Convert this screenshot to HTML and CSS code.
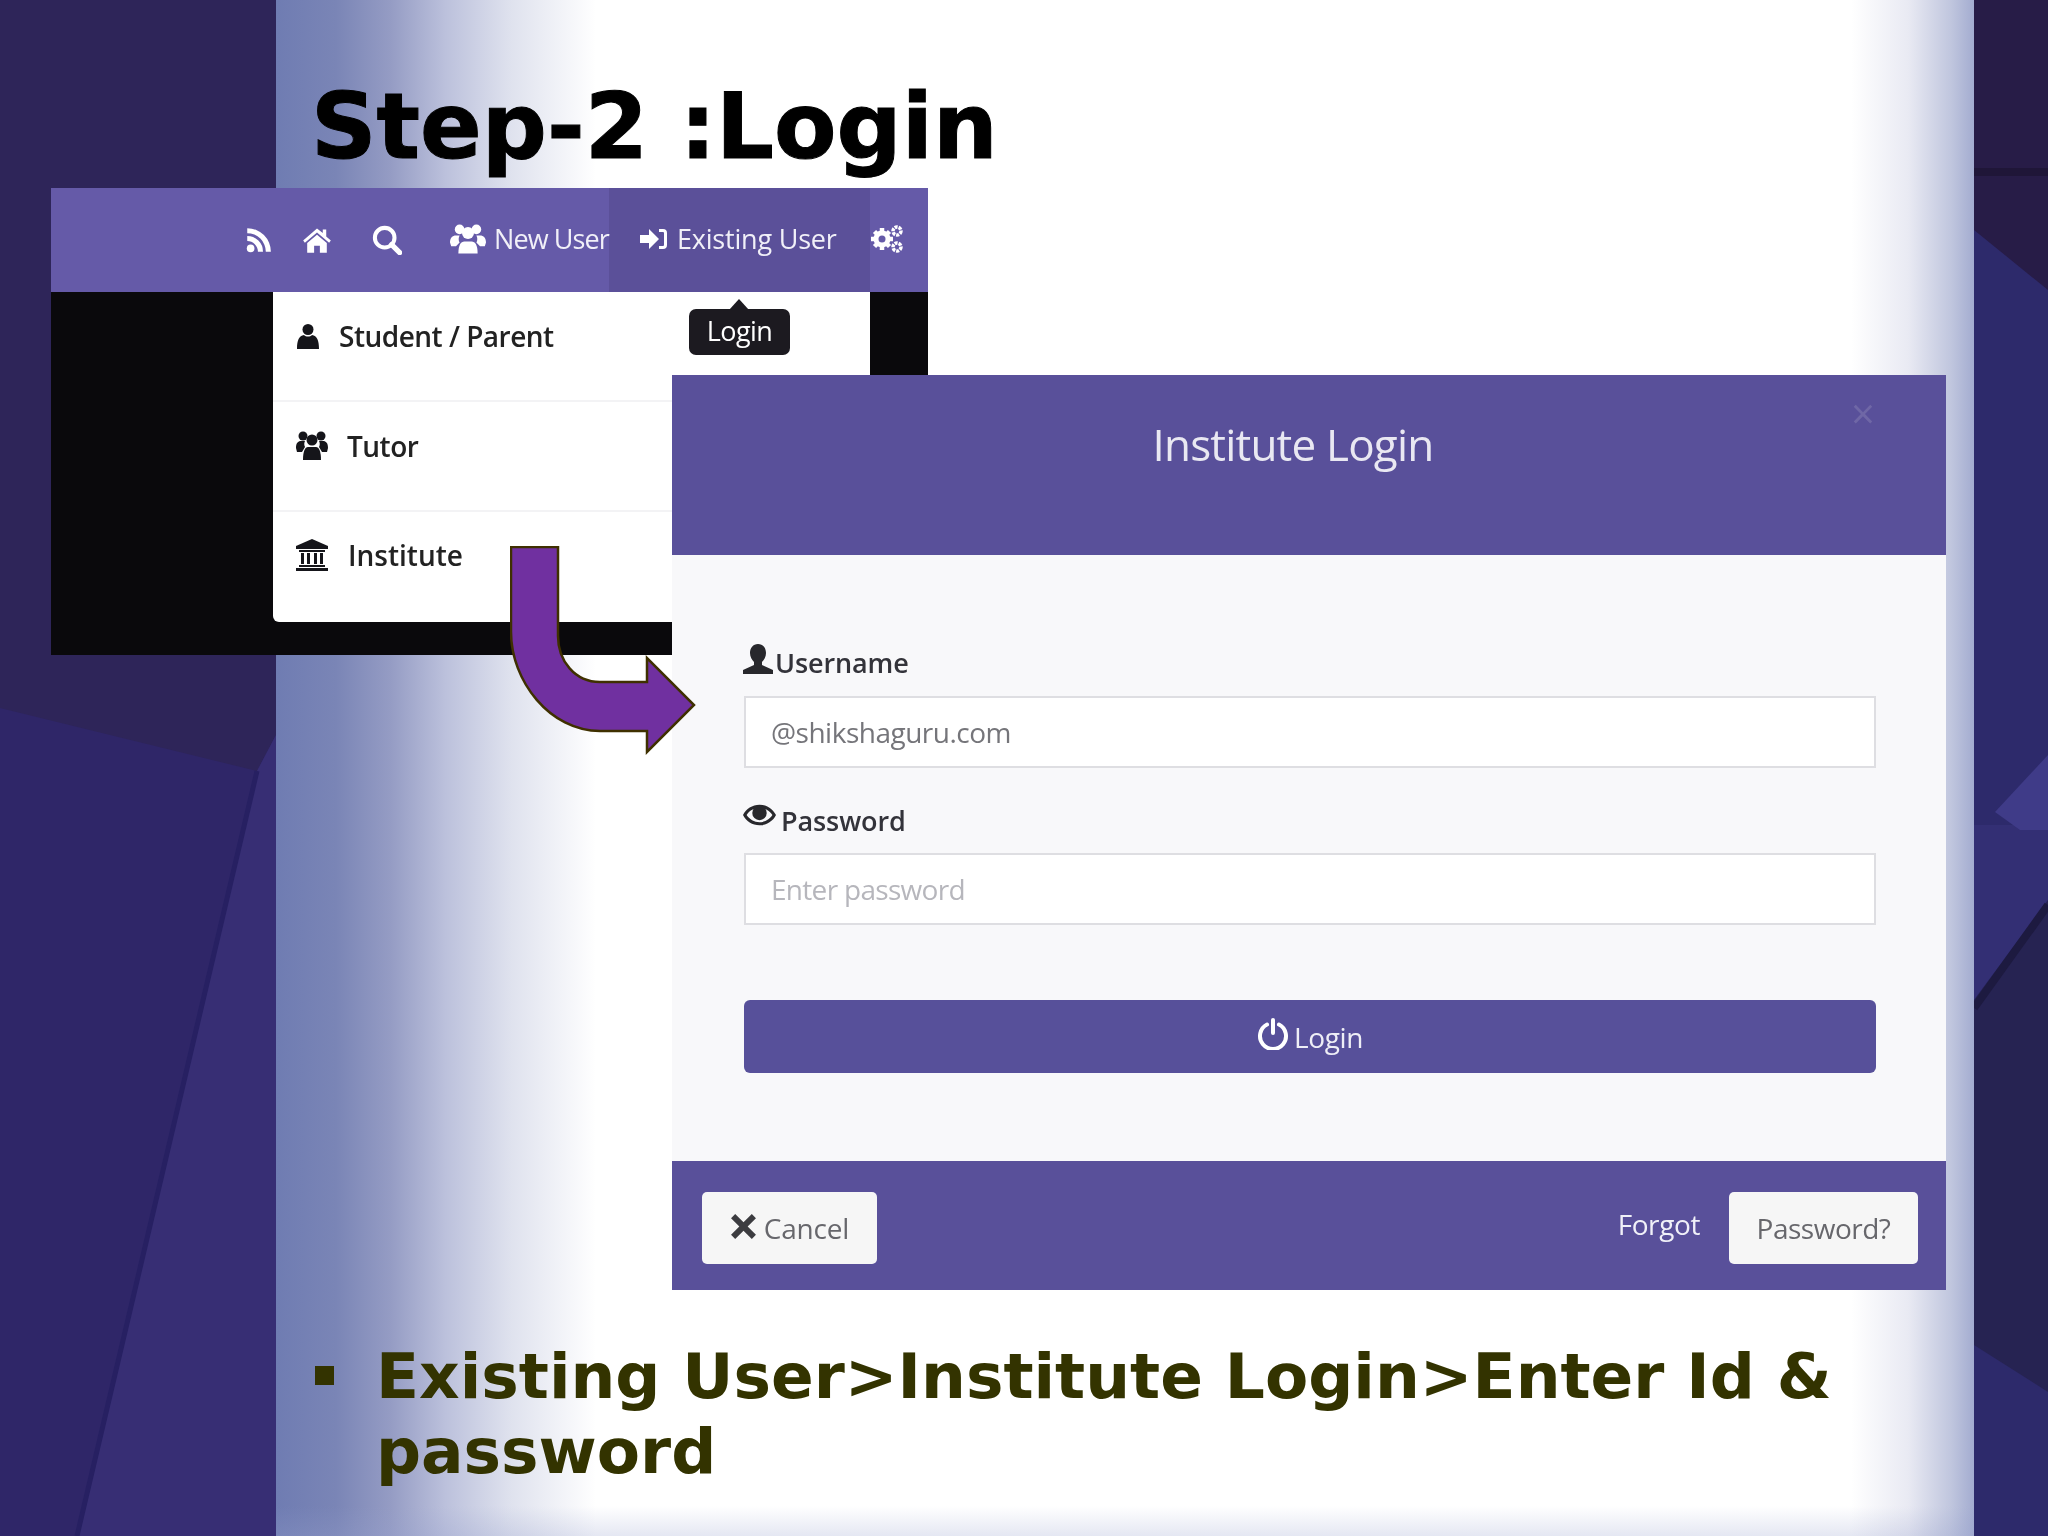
FILE: index.html
```html
<!DOCTYPE html>
<html lang="en">
<head>
    <meta charset="UTF-8">
    <title>Step-2 :Login</title>
    <link rel="stylesheet" href="styles.css">
</head>
<body>
    <div class="slide">
        <svg class="backdrop" viewBox="0 0 2048 1536">
            <rect width="276" height="1536" fill="#2e2559"/>
            <polygon points="0,708 257,771 276,735 276,1536 0,1536" fill="#2f2668"/>
            <polygon points="257,771 276,735 276,1536 77,1536" fill="#372e74"/>
            <polyline points="257,771 77,1536" fill="none" stroke="#272062" stroke-width="5"/>
            <rect x="1974" width="74" height="1536" fill="#2d2a6b"/>
            <polygon points="1974,0 2048,0 2048,290 1974,230" fill="#271c47"/>
            <rect x="1974" y="168" width="74" height="8" fill="#1f1638"/>
            <polygon points="1974,825 2048,825 2048,900 1974,1000" fill="#332f74"/>
            <polygon points="1995,812 2048,755 2048,830 2020,830" fill="#3f3b88"/>
            <polygon points="1974,1000 2048,900 2048,1392 1974,1345" fill="#262352"/>
            <polyline points="1974,1008 2048,905" fill="none" stroke="#1d1a40" stroke-width="8"/>
        </svg>

        <div class="panel">
            <h1 class="title">Step-2 :Login</h1>
            <ul class="points">
                <li>Existing User&gt;Institute Login&gt;Enter Id &amp; password</li>
            </ul>
        </div>

        <div class="nav-shot">
            <div class="navbar">
                <svg class="nav-icon rss" viewBox="0 0 24 24"><circle cx="5" cy="19" r="3.400"/><path d="M2 8v4.500a9.500 9.500 0 0 1 9.500 9.500H16A14 14 0 0 0 2 8z"/><path d="M2 1v4.500A16.500 16.500 0 0 1 18.500 22H23A21 21 0 0 0 2 1z"/></svg>
                <svg class="nav-icon home" viewBox="0 0 26 24"><path d="M13 2 1 12.500l1.500 1.800L13 5.500l10.500 8.800 1.500-1.800-4-3.500V3h-3v3z"/><path d="M13 7.500 4.500 14.500V23h6v-6h5v6h6v-8.500z"/></svg>
                <svg class="nav-icon search" viewBox="0 0 26 26"><circle cx="11" cy="11" r="8.500" fill="none" stroke="#fff" stroke-width="3.500"/><path d="M17 17l7 7" stroke="#fff" stroke-width="4.500" stroke-linecap="round"/></svg>
                <div class="nav-link first">
                    <svg class="nav-icon users" viewBox="0 0 30 26"><circle cx="8" cy="5" r="4"/><circle cx="22" cy="5" r="4"/><circle cx="15" cy="8" r="5"/><path d="M0 16c0-4 2-6 5-6h3c-1 2-1 4 0 6l-3 3H1z"/><path d="M30 16c0-4-2-6-5-6h-3c1 2 1 4 0 6l3 3h4z"/><path d="M7 25c0-7 2-10 5-10h6c3 0 5 3 5 10z"/></svg>
                    <span class="new-user">New User</span>
                </div>
                <div class="nav-link active">
                    <svg class="nav-icon signin" viewBox="0 0 28 24"><path d="M0 8h9V2l10 10-10 10v-6H0z"/><path d="M19 2h4a4 4 0 0 1 4 4v12a4 4 0 0 1-4 4h-4v-3h4a1 1 0 0 0 1-1V6a1 1 0 0 0-1-1h-4z"/></svg>
                    <span>Existing User</span>
                </div>
                <svg class="nav-icon gears" viewBox="0 0 34 30"><path d="M12 4v22M1 15h22M4.500 7.500l15 15M19.500 7.500l-15 15" stroke="#fff" stroke-width="4.500"/><circle cx="12" cy="15" r="8.500"/><circle cx="12" cy="15" r="3.500" fill="#655aa8"/><circle cx="27" cy="7" r="4" fill="none" stroke="#fff" stroke-width="3.500" stroke-dasharray="3 1"/><circle cx="27" cy="23" r="4" fill="none" stroke="#fff" stroke-width="3.500" stroke-dasharray="3 1"/></svg>
            </div>
            <div class="dark-area">
                <div class="dropdown">
                    <div class="drop-item">
                        <svg class="drop-icon student" viewBox="0 0 24 26"><circle cx="12" cy="6.500" r="5.500"/><path d="M1 26c0-9 2-13 7-14 2 2 6 2 8 0 5 1 7 5 7 14z"/></svg>
                        <span class="tight">Student / Parent</span>
                    </div>
                    <div class="drop-item">
                        <svg class="drop-icon tutor" viewBox="0 0 32 30"><circle cx="7" cy="5" r="4.500"/><circle cx="25" cy="5" r="4.500"/><circle cx="16" cy="9" r="5.500"/><path d="M0 17c0-5 2-7 5-7h4c-1 2-1 4 0 6l-3 5H1z"/><path d="M32 17c0-5-2-7-5-7h-4c1 2 1 4 0 6l3 5h5z"/><path d="M7 29c0-9 2-13 5-13h8c3 0 5 4 5 13z"/></svg>
                        <span class="tight">Tutor</span>
                    </div>
                    <div class="drop-item last">
                        <svg class="drop-icon bank" viewBox="0 0 32 32"><path d="M16 0 0 7v3h32V7z"/><path d="M3 11h26v2H3zM5 14h3v11H5zM11 14h3v11h-3zM18 14h3v11h-3zM24 14h3v11h-3zM3 26h26v2H3zM0 29h32v3H0z"/></svg>
                        <span>Institute</span>
                    </div>
                    <div class="tooltip">Login</div>
                </div>
            </div>
        </div>

        <div class="modal">
            <div class="modal-head">
                <h2>Institute Login</h2>
                <span class="close">×</span>
            </div>
            <div class="modal-body">
                <label class="field-label">
                    <svg class="label-icon" viewBox="0 0 30 30"><path d="M15 0c-5 0-8 4-8 9 0 4 2 7 4 9v3L0 26v4h30v-4l-11-5v-3c2-2 4-5 4-9 0-5-3-9-8-9z"/></svg>
                    <span>Username</span>
                </label>
                <input class="field" type="text" placeholder="@shikshaguru.com">
                <label class="field-label second">
                    <svg class="label-icon eye" viewBox="0 0 32 24"><path d="M16 2C9 2 3 6 0 12c3 6 9 10 16 10s13-4 16-10C29 6 23 2 16 2zm0 17c-5 0-10-3-12.500-7C6 8 11 5 16 5s10 3 12.500 7C26 16 21 19 16 19z"/><circle cx="16" cy="10" r="7"/></svg>
                    <span>Password</span>
                </label>
                <input class="field faint" type="password" placeholder="Enter password">
                <button class="login-btn">
                    <svg class="power" viewBox="0 0 32 32"><path d="M10 6.500a13 13 0 1 0 12 0" fill="none" stroke="#fff" stroke-width="4" stroke-linecap="round"/><path d="M16 2v13" stroke="#fff" stroke-width="4" stroke-linecap="round"/></svg>
                    <span>Login</span>
                </button>
            </div>
            <div class="modal-foot">
                <button class="foot-btn cancel">
                    <svg class="x-icon" viewBox="0 0 26 26"><path d="M5 1 13 9l8-8 4 4-8 8 8 8-4 4-8-8-8 8-4-4 8-8-8-8z"/></svg>
                    <span>Cancel</span>
                </button>
                <span class="forgot">Forgot</span>
                <button class="foot-btn">Password?</button>
            </div>
        </div>

        <svg class="arrow" viewBox="0 0 200 220">
            <path d="M1 1H48V90C48 115 65 136 90 136H137V112L184 159 137 206V185H90C40 185 1 135 1 86z" fill="#7030a0" stroke="#3f3000" stroke-width="2.500"/>
        </svg>
    </div>
</body>
</html>
```

FILE: styles.css
```css
body {
    margin: 0;
    font-family: 'Open Sans', 'Noto Sans', sans-serif;
}
.slide {
    position: relative;
    width: 2048px;
    height: 1536px;
    overflow: hidden;
}
.backdrop {
    position: absolute;
    left: 0;
    top: 0;
    width: 2048px;
    height: 1536px;
}
.panel {
    position: relative;
    box-sizing: border-box;
    display: flex;
    flex-direction: column;
    width: 1698px;
    height: 1536px;
    margin-left: 276px;
    padding: 71px 0 0 35px;
    background: linear-gradient(90deg, #6f7cb2 0, #7a85b6 60px, #959cc4 115px, #bcc1dc 170px, #dfe2ee 235px, #fff 320px, #fff 1575px, #e9eaf3 1632px, #c0c6de 1675px, #a3acd0 1698px);
}
.panel::after {
    content: '';
    position: absolute;
    left: 0;
    right: 0;
    bottom: 0;
    height: 30px;
    background: linear-gradient(0deg, rgba(150, 160, 205, 0.25), rgba(150, 160, 205, 0));
}
.title {
    margin: 0;
    font-family: 'DejaVu Sans', sans-serif;
    font-size: 91px;
    font-weight: bold;
    line-height: 112px;
    color: #000;
    -webkit-text-stroke: 1px #000;
}
.points {
    margin: 1156px 0 0;
    padding: 0 0 0 65px;
    list-style: none;
    position: relative;
    font-family: 'DejaVu Sans', sans-serif;
    font-size: 63px;
    font-weight: bold;
    line-height: 75px;
    color: #333300;
}
.points li::before {
    content: '';
    position: absolute;
    left: 4px;
    top: 27px;
    width: 19px;
    height: 19px;
    background: #333300;
}

/* pasted site screenshot */
.nav-shot {
    position: absolute;
    left: 51px;
    top: 188px;
    width: 877px;
    height: 467px;
    display: flex;
    flex-direction: column;
    filter: blur(0.6px);
}
.navbar {
    height: 104px;
    display: flex;
    align-items: center;
    padding-left: 194px;
    background: #655aa8;
}
.nav-icon {
    fill: #fff;
    flex: none;
}
.rss {
    width: 27px;
    height: 27px;
    margin-right: 30px;
}
.home {
    width: 30px;
    height: 28px;
    margin-right: 40px;
}
.search {
    width: 30px;
    height: 30px;
    margin-right: 48px;
}
.nav-link {
    display: flex;
    align-items: center;
    gap: 8px;
    height: 100%;
    padding-bottom: 3px;
    box-sizing: border-box;
    color: #f1f0f8;
    font-size: 27px;
}
.nav-link.first {
    position: relative;
    z-index: 1;
    flex: none;
    width: 159px;
}
.new-user {
    letter-spacing: -0.9px;
    white-space: nowrap;
}
.users {
    width: 36px;
    height: 32px;
}
.nav-link.active {
    width: 261px;
    flex: none;
    padding-left: 31px;
    background: #5b5099;
    gap: 9px;
    letter-spacing: -0.2px;
}
.signin {
    width: 28px;
    height: 24px;
}
.gears {
    width: 34px;
    height: 30px;
    margin-top: -3px;
}
.dark-area {
    flex: 1;
    background: #0a090c;
}
.dropdown {
    position: relative;
    width: 597px;
    height: 330px;
    margin-left: 222px;
    background: #fff;
    border-radius: 0 0 6px 6px;
}
.drop-item {
    box-sizing: border-box;
    height: 110px;
    display: flex;
    align-items: center;
    padding: 0 0 20px 23px;
    gap: 19px;
    border-bottom: 2px solid #f3f3f5;
    color: #222;
    font-size: 28px;
    font-weight: 600;
}
.drop-item.last {
    padding-bottom: 24px;
    border-bottom: none;
}
.tight {
    letter-spacing: -0.5px;
}
.drop-icon {
    fill: #15151a;
    flex: none;
}
.student {
    width: 24px;
    height: 26px;
}
.tutor {
    width: 32px;
    height: 30px;
}
.bank {
    width: 32px;
    height: 32px;
    margin-right: 1px;
}
.tooltip {
    position: absolute;
    left: 416px;
    top: 17px;
    width: 101px;
    height: 46px;
    line-height: 44px;
    text-align: center;
    color: #fff;
    font-size: 27px;
    letter-spacing: -0.6px;
    background: #1c1a20;
    border-radius: 7px;
}
.tooltip::before {
    content: '';
    position: absolute;
    left: 40px;
    top: -10px;
    border-left: 10px solid transparent;
    border-right: 10px solid transparent;
    border-bottom: 11px solid #1c1a20;
}

/* login dialog */
.modal {
    position: absolute;
    left: 672px;
    top: 375px;
    width: 1274px;
    height: 915px;
    display: flex;
    flex-direction: column;
    filter: blur(0.6px);
}
.modal-head {
    position: relative;
    height: 180px;
    background: #59509a;
    text-align: center;
}
.modal-head h2 {
    margin: 0 0 0 -32px;
    padding: 41px 0 0;
    font-size: 44px;
    font-weight: 400;
    line-height: 56px;
    letter-spacing: -0.8px;
    color: #e9e8f2;
}
.close {
    position: absolute;
    right: 71px;
    top: 13px;
    font-size: 42px;
    line-height: 50px;
    color: #6f67a6;
}
.modal-body {
    flex: 1;
    display: flex;
    flex-direction: column;
    padding: 90px 70px 0 72px;
    background: #f8f8fa;
}
.field-label {
    display: flex;
    align-items: flex-end;
    height: 34px;
    font-size: 27px;
    font-weight: 600;
    line-height: 32px;
    color: #33333a;
    letter-spacing: -0.1px;
}
.field-label.second {
    margin-top: 35px;
}
.label-icon {
    width: 30px;
    height: 30px;
    margin: 0 2px 5px -1px;
    fill: #28282c;
    flex: none;
}
.eye {
    width: 33px;
    height: 26px;
    margin: 0 5px 9px -1px;
}
.field {
    box-sizing: border-box;
    height: 72px;
    margin-top: 17px;
    padding: 0 25px;
    border: 2px solid #dedee2;
    background: #fff;
    font-family: inherit;
    font-size: 28px;
    letter-spacing: -0.5px;
    outline: none;
}
.field.faint {
    margin-top: 16px;
    letter-spacing: -0.7px;
}
.field::placeholder {
    color: #75757a;
}
.field.faint::placeholder {
    color: #b6b6bc;
}
.login-btn {
    height: 73px;
    margin-top: 75px;
    display: flex;
    align-items: center;
    justify-content: center;
    gap: 5px;
    border: none;
    border-radius: 6px;
    background: #57509a;
    color: #eeeef6;
    font-family: inherit;
    font-size: 28px;
    letter-spacing: -0.4px;
}
.power {
    width: 32px;
    height: 32px;
    margin-top: -6px;
}
.modal-foot {
    height: 129px;
    display: flex;
    align-items: center;
    padding: 0 28px 0 30px;
    background: #59509a;
}
.foot-btn {
    box-sizing: border-box;
    height: 72px;
    width: 189px;
    display: flex;
    align-items: center;
    justify-content: center;
    gap: 7px;
    margin-top: 5px;
    border: none;
    border-radius: 5px;
    background: #f6f6f6;
    color: #67676c;
    font-family: inherit;
    font-size: 28px;
    letter-spacing: -0.5px;
}
.foot-btn.cancel {
    width: 175px;
    letter-spacing: -0.2px;
}
.x-icon {
    width: 27px;
    height: 27px;
    fill: #3c3c40;
    margin-top: -4px;
}
.forgot {
    margin-left: auto;
    margin-right: 29px;
    margin-top: -4px;
    color: #f0f0f8;
    font-size: 28px;
    letter-spacing: -0.4px;
}
.arrow {
    position: absolute;
    left: 510px;
    top: 546px;
    width: 200px;
    height: 220px;
}
```
